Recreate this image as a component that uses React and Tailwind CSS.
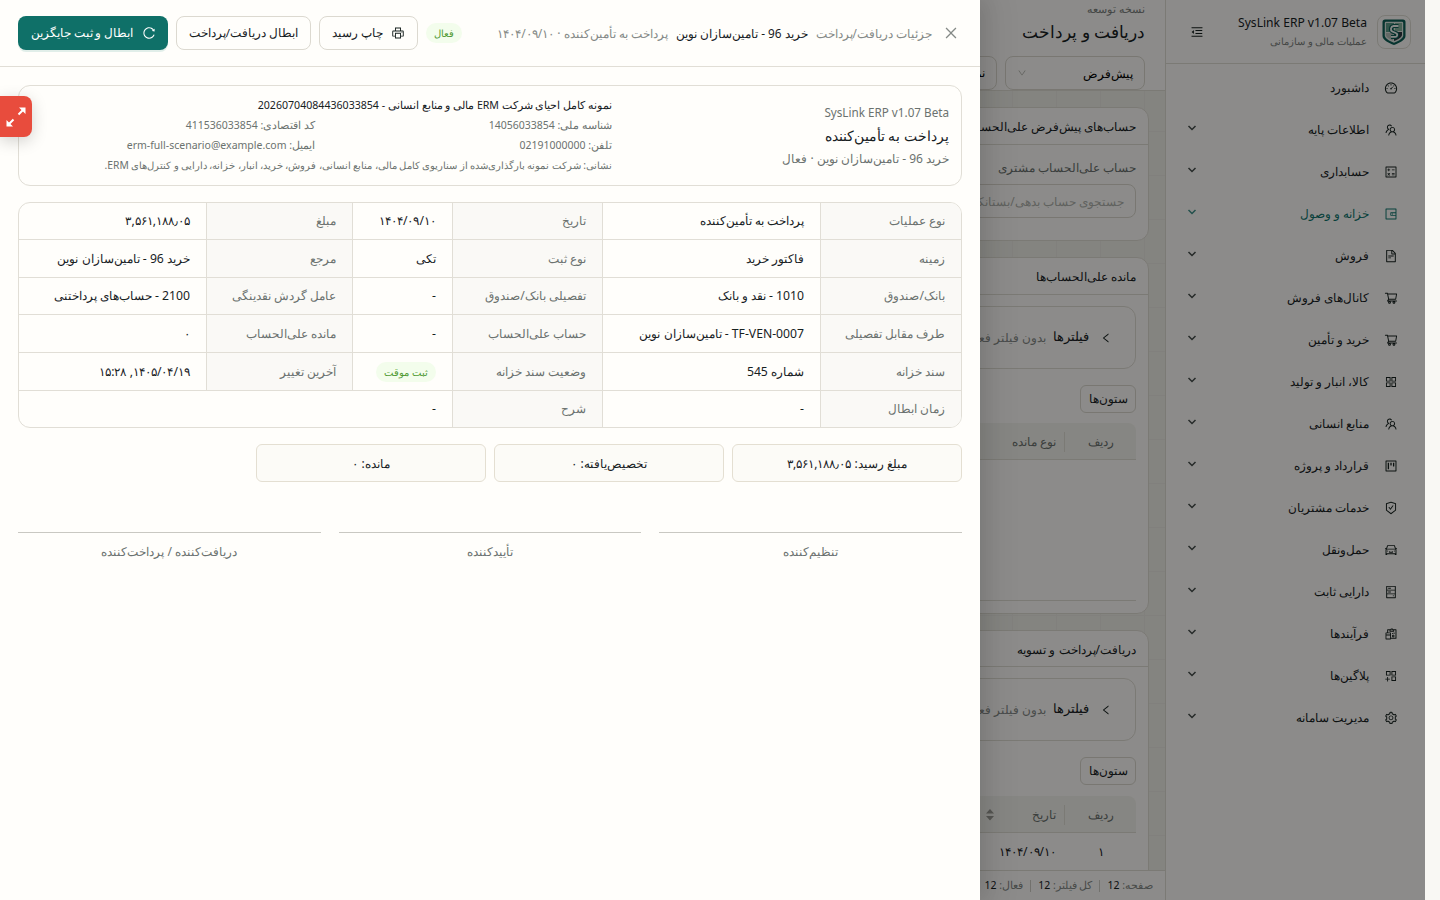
import React from "react";
import {
  AiOutlineDashboard, AiOutlineTeam, AiOutlineCalculator, AiOutlineWallet, AiOutlineFileText,
  AiOutlineShoppingCart, AiOutlineAppstore, AiOutlineProject, AiOutlineSafetyCertificate,
  AiOutlineCar, AiOutlineHdd, AiOutlineReconciliation, AiOutlineAppstoreAdd, AiOutlineSetting,
  AiOutlineMenuFold, AiOutlinePrinter, AiOutlineReload, AiOutlineClose, AiOutlineDown, AiOutlineLeft,
} from "react-icons/ai";

const menu = [
  ["داشبورد", AiOutlineDashboard],
  ["اطلاعات پایه", AiOutlineTeam],
  ["حسابداری", AiOutlineCalculator],
  ["خزانه و وصول", AiOutlineWallet],
  ["فروش", AiOutlineFileText],
  ["کانال‌های فروش", AiOutlineShoppingCart],
  ["خرید و تأمین", AiOutlineShoppingCart],
  ["کالا، انبار و تولید", AiOutlineAppstore],
  ["منابع انسانی", AiOutlineTeam],
  ["قرارداد و پروژه", AiOutlineProject],
  ["خدمات مشتریان", AiOutlineSafetyCertificate],
  ["حمل‌ونقل", AiOutlineCar],
  ["دارایی ثابت", AiOutlineHdd],
  ["فرآیندها", AiOutlineReconciliation],
  ["پلاگین‌ها", AiOutlineAppstoreAdd],
  ["مدیریت سامانه", AiOutlineSetting],
];

function Logo() {
  return (
    <svg width="26" height="28" viewBox="0 0 26 28">
      <path d="M4 1.500h18a2.500 2.500 0 0 1 2.500 2.500V18c0 4-6 7-11.500 9C7.500 25 1.500 22 1.500 18V4A2.500 2.500 0 0 1 4 1.500z" fill="#0d5f57" />
      <path d="M5 3.700h16a1.200 1.200 0 0 1 1.200 1.200V17.500c0 3-4.500 5.300-9.200 7.200-4.700-1.900-9.200-4.200-9.200-7.200V4.900A1.200 1.200 0 0 1 5 3.700z" fill="#dfe7e2" />
      <path d="M5 5h8v9H5z" fill="#5c9c89" />
      <path d="M13 14h8v3c0 2-4 4.500-8 6z" fill="#2c3a42" />
      <path d="M14 5h7v8h-7z" fill="#86b39d" />
      <path d="M5 15h7v7.500c-4-1.600-7-3.500-7-5.500z" fill="#b4bfba" />
      <path d="M17.500 8h-5a3 3 0 0 0-1.200 5.500l3.500 1.500a2 2 0 0 1-.8 3.900H10" fill="none" stroke="#0d5f57" strokeWidth="4" />
      <path d="M17.500 8h-5a3 3 0 0 0-1.200 5.500l3.500 1.500a2 2 0 0 1-.8 3.900H10" fill="none" stroke="#f4f8f5" strokeWidth="1.800" />
    </svg>
  );
}

function Sidebar() {
  return (
    <aside className="flex h-full w-[260px] shrink-0 flex-col border-l border-[#e1ded6] bg-[#fffefb]">
      <div className="flex h-16 items-center border-b border-[#e1ded6] pr-3.5 pl-6">
        <div className="flex h-[34px] w-[34px] items-center justify-center rounded-lg border border-[#e1ded6]">
          <Logo />
        </div>
        <div className="-mt-0.5 mr-2.5 flex-1">
          <div className="text-right text-[12.100px] leading-[20px] text-[#17211f]" dir="ltr">SysLink ERP v1.07 Beta</div>
          <div className="text-[10.100px] leading-[16px] text-[#7b807d]">عملیات مالی و سازمانی</div>
        </div>
        <AiOutlineMenuFold className="text-[14px] text-[#17211f]" />
      </div>
      <nav className="flex flex-col pt-[3px]">
        {menu.map(([label, Icon], i) => (
          <div
            key={label}
            className={
              i === 3
                ? "flex h-[42px] items-center pr-[27px] pl-[21px] text-[#0f766e]"
                : "flex h-[42px] items-center pr-[27px] pl-[21px] text-[#17211f]"
            }
          >
            <Icon className="text-[14px]" />
            <span className="mr-[15px] flex-1 text-xs leading-[18px]">{label}</span>
            {i > 0 && (
              <svg width="10" height="10" viewBox="0 0 10 10" className="-mt-1">
                <path d="M1.500 3 5 6.500 8.500 3" fill="none" stroke="currentColor" strokeWidth="1.500" strokeOpacity=".8" />
              </svg>
            )}
          </div>
        ))}
      </nav>
    </aside>
  );
}

function Panel({ title, className, children }) {
  return (
    <section className={"shrink-0 rounded-xl border border-[#e1ded6] bg-[#fffefb] " + className}>
      <div className="flex h-[37px] items-center border-b border-[#e1ded6] px-3 pt-0.5 text-xs text-[#17211f]">{title}</div>
      <div className="px-3">{children}</div>
    </section>
  );
}

function Filters() {
  return (
    <>
      <div className="mt-[11px] flex h-[63px] items-center rounded-xl border border-[#e1ded6] pr-[23px] text-xs">
        <AiOutlineLeft className="text-xs text-[#17211f]" />
        <span className="mr-[11px] text-[12.500px] text-[#17211f]">فیلترها</span>
        <span className="mr-[7px] text-[#858a87]">بدون فیلتر فعال</span>
      </div>
      <div className="mt-4 flex h-7 w-14 items-center justify-center rounded-md border border-[#dcd9d0] text-[12.200px] text-[#17211f]">ستون‌ها</div>
    </>
  );
}

function TableHead({ label, sort }) {
  return (
    <div
      className={
        (sort ? "mt-[11px] " : "mt-[10px] ") +
        "flex h-[37px] items-center rounded-t-lg border-b border-[#e1ded6] bg-[#f5f4ee] pt-px text-xs text-[#6b726f]"
      }
    >
      <span className="w-[71px] text-center">ردیف</span>
      <span className="h-5 w-px bg-[#e1ded6]" />
      <span className="mr-2 w-[61px]">{label}</span>
      {sort && (
        <svg width="10" height="12" viewBox="0 0 10 12" className="text-[#9b9b96]">
          <path d="M5 0 9 4.500H1zM5 11.500 9 7H1z" fill="currentColor" />
        </svg>
      )}
    </div>
  );
}

function Main() {
  return (
    <main className="flex h-full flex-1 flex-col overflow-hidden bg-[#f1f0ea]">
      <header className="h-[91px] shrink-0 border-b border-[#e1ded6] bg-[#fffefb] pr-5">
        <div className="text-[11px] leading-[18px] text-[#7b807d]">نسخه توسعه</div>
        <div className="mt-px text-[16.500px] leading-[26px] text-[#17211f]">دریافت و پرداخت</div>
        <div className="mt-[11px] flex gap-2 text-xs">
          <div className="flex h-[34px] w-[140px] items-center justify-between rounded-lg border border-[#dcd9d0] pr-[11px] pl-[11px]">
            <span className="pt-0.5">پیش‌فرض</span>
            <AiOutlineDown className="text-[10px] text-[#b0b0ab]" />
          </div>
          <div className="flex h-[34px] w-[120px] items-center rounded-lg border border-[#dcd9d0] pr-[11px]">نماها</div>
        </div>
      </header>
      <div className="flex min-h-0 flex-1 flex-col gap-4 overflow-hidden bg-[linear-gradient(#ebeae4_1px,transparent_1px),linear-gradient(90deg,#ebeae4_1px,transparent_1px)] bg-[size:44px_44px] bg-[position:0_40px] px-4 pt-4">
        <Panel title="حساب‌های پیش‌فرض علی‌الحساب" className="h-[134px]">
          <div className="mt-3 text-xs leading-[22px] text-[#6b726f]">حساب علی‌الحساب مشتری</div>
          <div className="mt-[5px] flex h-[34px] items-center rounded-lg border border-[#dcd9d0] px-[11px] pt-0.5 text-xs text-[#b0b2ad]">
            جستجوی حساب بدهی/بستانکار
          </div>
        </Panel>
        <Panel title="مانده علی‌الحساب‌ها" className="h-[357px]">
          <Filters />
          <TableHead label="نوع مانده" />
          <div className="h-[141px] border-b border-[#e1ded6]" />
        </Panel>
        <Panel title="دریافت/پرداخت و تسویه" className="h-[400px] [&>div:first-child]:h-9">
          <Filters />
          <TableHead label="تاریخ" sort />
          <div className="flex h-[38px] items-center border-b border-[#e1ded6] text-xs text-[#17211f]">
            <span className="w-[71px] text-center">۱</span>
            <span className="mr-[9px] tracking-[-1.200px]">۱۴۰۴/۰۹/۱۰</span>
          </div>
        </Panel>
      </div>
      <footer className="flex h-[30px] shrink-0 items-center gap-[7px] border-t border-[#e1ded6] bg-[#fffefb] pr-3 text-[10.500px] text-[#858a87]">
        <span>صفحه: <b className="font-normal text-[#17211f]">12</b></span>
        <span className="h-3 w-px bg-[#d0cec6]" />
        <span>کل فیلتر: <b className="font-normal text-[#17211f]">12</b></span>
        <span className="h-3 w-px bg-[#d0cec6]" />
        <span>فعال: <b className="font-normal text-[#17211f]">12</b></span>
      </footer>
    </main>
  );
}

const rows = [
  ["نوع عملیات", "پرداخت به تأمین‌کننده", "تاریخ", "۱۴۰۴/۰۹/۱۰", "مبلغ", "۳,۵۶۱,۱۸۸٫۰۵"],
  ["زمینه", "فاکتور خرید", "نوع ثبت", "تکی", "مرجع", "خرید 96 - تامین‌سازان نوین"],
  ["بانک/صندوق", "1010 - نقد و بانک", "تفصیلی بانک/صندوق", "-", "عامل گردش نقدینگی", "2100 - حساب‌های پرداختنی"],
  ["طرف مقابل تفصیلی", "TF-VEN-0007 - تامین‌سازان نوین", "حساب علی‌الحساب", "-", "مانده علی‌الحساب", "۰"],
  ["سند خزانه", "شماره 545", "وضعیت سند خزانه", "ثبت موقت", "آخرین تغییر", "۱۴۰۵/۰۴/۱۹, ۱۵:۲۸"],
  ["زمان ابطال", "-", "شرح", "-"],
];

function Tag({ children }) {
  return (
    <span className="inline-flex h-5 items-center rounded-full bg-[#f3fdec] px-2 pt-px text-[10px] text-[#4f9a33]">{children}</span>
  );
}

function Cell({ text }) {
  if (text === "ثبت موقت") return <Tag>{text}</Tag>;
  if (text.includes(":")) return <span className="tracking-[-0.500px]">{text}</span>;
  if (text.startsWith("۱۴۰۴")) return <span className="tracking-[-1.200px]">{text}</span>;
  return <span>{text}</span>;
}

function Details() {
  return (
    <div className="mt-4 grid h-[226px] grid-cols-[141px_218px_150px_100px_146px_1fr] grid-rows-[37px_38px_37px_38px_38px_36px] overflow-hidden rounded-xl border border-[#e1ded6] text-[12.200px]">
      {rows.map((r, y) =>
        r.map((c, x) => (
          <div
            key={y + "-" + x}
            className={[
              "flex items-center whitespace-nowrap border-[#e1ded6] px-4 pt-px",
              x % 2 === 0 ? "bg-[#faf9f6] text-[#6b726f]" : "text-[#17211f]",
              x < r.length - 1 ? "border-l" : "",
              y < rows.length - 1 ? "border-b" : "",
              r.length === 4 && x === 3 ? "col-span-3" : "",
            ].join(" ")}
          >
            <Cell text={c} />
          </div>
        ))
      )}
    </div>
  );
}

function Drawer() {
  return (
    <div className="absolute top-0 left-0 flex h-full w-[980px] flex-col bg-[#fffefb] shadow-[6px_0_16px_0_rgba(0,0,0,0.08),9px_0_28px_8px_rgba(0,0,0,0.05)]">
      <header className="flex h-[67px] shrink-0 items-center border-b border-[#e1ded6] pr-[21px] pl-[18px] text-[11.700px]">
        <AiOutlineClose className="shrink-0 text-base text-[#858a87]" />
        <div className="mr-[11px] flex flex-1 gap-2 pt-0.5 whitespace-nowrap">
          <span className="text-[#858a87]">جزئیات دریافت/پرداخت</span>
          <span className="text-[11.800px] text-[#17211f]">خرید 96 - تامین‌سازان نوین</span>
          <span className="text-[12.100px] text-[#858a87]">پرداخت به تأمین‌کننده · <span className="tracking-[-0.700px]">۱۴۰۴/۰۹/۱۰</span></span>
        </div>
        <div className="flex items-center gap-2 text-[#17211f]">
          <Tag>فعال</Tag>
          <button className="flex h-[34px] w-[99px] items-center justify-center gap-2 rounded-lg border border-[#dcd9d0]">
            <AiOutlinePrinter className="text-sm" />
            <span>چاپ رسید</span>
          </button>
          <button className="flex h-[34px] w-[135px] items-center justify-center rounded-lg border border-[#dcd9d0] text-[11.500px]">ابطال دریافت/پرداخت</button>
          <button className="flex h-[34px] w-[150px] items-center justify-center gap-2 rounded-lg bg-[#0f7068] text-[11.500px] font-medium text-white shadow-[0_2px_0_rgba(5,120,110,0.12)]">
            <AiOutlineReload className="text-sm" />
            <span>ابطال و ثبت جایگزین</span>
          </button>
        </div>
      </header>
      <div className="px-[18px] pt-[18px]">
        <div className="flex h-[101px] items-center rounded-xl border border-[#e1ded6] px-3">
          <div className="w-[337px] shrink-0 text-xs text-[#6b726f]">
            <div className="text-right text-[11.700px] leading-[22px]" dir="ltr">SysLink ERP v1.07 Beta</div>
            <div className="text-[14.400px] leading-[25px] text-[#17211f]">پرداخت به تأمین‌کننده</div>
            <div className="leading-[22px]">خرید 96 - تامین‌سازان نوین · فعال</div>
          </div>
          <div className="-mt-0.5 grid flex-1 grid-cols-[297px_1fr] text-[10.500px] leading-[20px] text-[#6b726f]">
            <div className="col-span-2 text-[10.600px] text-[#17211f]">نمونه کامل احیای شرکت ERM مالی و منابع انسانی - 20260704084436033854</div>
            <div>شناسه ملی: 14056033854</div>
            <div>کد اقتصادی: 411536033854</div>
            <div>تلفن: 02191000000</div>
            <div>ایمیل: erm-full-scenario@example.com</div>
            <div className="col-span-2 text-[10.300px] whitespace-nowrap [word-spacing:-0.300px]">
              نشانی: شرکت نمونه بارگذاری‌شده از سناریوی کامل مالی، منابع انسانی، فروش، خرید، انبار، خزانه، دارایی و کنترل‌های ERM.
            </div>
          </div>
        </div>
        <Details />
        <div className="mt-4 flex gap-2 text-xs text-[#17211f]">
          {["مبلغ رسید: ۳,۵۶۱,۱۸۸٫۰۵", "تخصیص‌یافته: ۰", "مانده: ۰"].map((t) => (
            <div key={t} className="flex h-[38px] w-[230px] items-center justify-center rounded-md border border-[#e4dfd2] bg-[#fcfbf7] pt-0.5">{t}</div>
          ))}
        </div>
        <div className="mt-[50px] grid grid-cols-3 gap-[18px] text-center text-xs text-[#6b726f]">
          {["تنظیم‌کننده", "تأییدکننده", "دریافت‌کننده / پرداخت‌کننده"].map((t) => (
            <div key={t} className="border-t border-[#c9c8c2] pt-[11px]">{t}</div>
          ))}
        </div>
      </div>
    </div>
  );
}

export default function App() {
  return (
    <div
      dir="rtl"
      className="relative flex h-[900px] w-[1440px] overflow-hidden bg-[#f9f8f4] pr-[15px] font-['Noto_Sans',sans-serif]"
    >
      <Sidebar />
      <Main />
      <div className="absolute top-0 left-0 h-full w-[1425px] bg-black/45" />
      <Drawer />
      <div className="absolute top-24 left-0 flex h-[41px] w-8 items-center justify-center rounded-r-lg bg-[#e84c3d] shadow-[0_4px_16px_rgba(0,0,0,0.18)]">
        <svg width="20" height="20" viewBox="0 0 20 20" fill="#fff" stroke="#fff">
          <path d="M19.500.500v6.500l-6.500-6.500zM.500 19.500v-6.500l6.500 6.500z" stroke="none" />
          <path d="m12.500 7.500 4.500-4.500M7.500 12.500l-4.500 4.500" strokeWidth="2" />
        </svg>
      </div>
    </div>
  );
}
